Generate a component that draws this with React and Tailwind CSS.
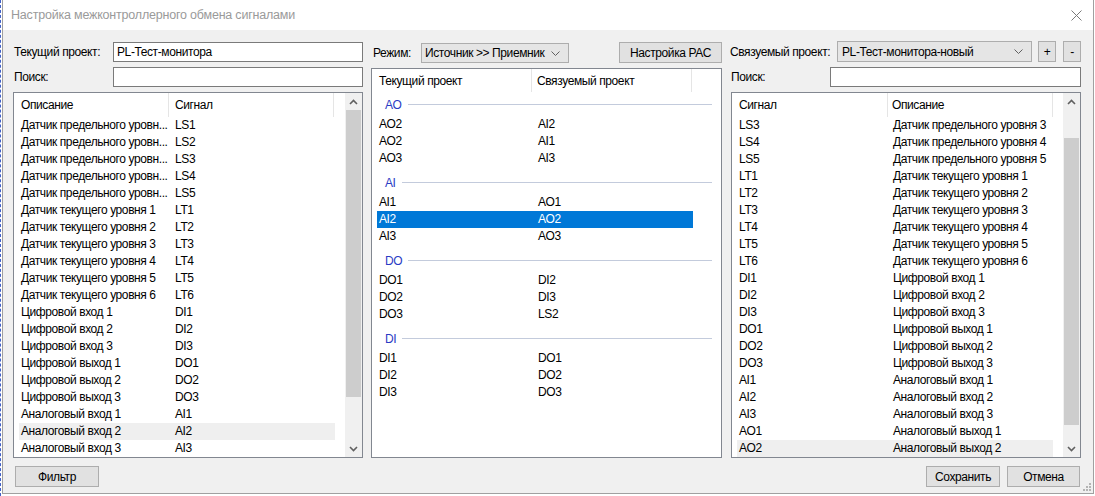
import React from 'react';

const leftRows = [
  ['Датчик предельного уровн...', 'LS1'],
  ['Датчик предельного уровн...', 'LS2'],
  ['Датчик предельного уровн...', 'LS3'],
  ['Датчик предельного уровн...', 'LS4'],
  ['Датчик предельного уровн...', 'LS5'],
  ['Датчик текущего уровня 1', 'LT1'],
  ['Датчик текущего уровня 2', 'LT2'],
  ['Датчик текущего уровня 3', 'LT3'],
  ['Датчик текущего уровня 4', 'LT4'],
  ['Датчик текущего уровня 5', 'LT5'],
  ['Датчик текущего уровня 6', 'LT6'],
  ['Цифровой вход 1', 'DI1'],
  ['Цифровой вход 2', 'DI2'],
  ['Цифровой вход 3', 'DI3'],
  ['Цифровой выход 1', 'DO1'],
  ['Цифровой выход 2', 'DO2'],
  ['Цифровой выход 3', 'DO3'],
  ['Аналоговый вход 1', 'AI1'],
  ['Аналоговый вход 2', 'AI2'],
  ['Аналоговый вход 3', 'AI3'],
];

const rightRows = [
  ['LS3', 'Датчик предельного уровня 3'],
  ['LS4', 'Датчик предельного уровня 4'],
  ['LS5', 'Датчик предельного уровня 5'],
  ['LT1', 'Датчик текущего уровня 1'],
  ['LT2', 'Датчик текущего уровня 2'],
  ['LT3', 'Датчик текущего уровня 3'],
  ['LT4', 'Датчик текущего уровня 4'],
  ['LT5', 'Датчик текущего уровня 5'],
  ['LT6', 'Датчик текущего уровня 6'],
  ['DI1', 'Цифровой вход 1'],
  ['DI2', 'Цифровой вход 2'],
  ['DI3', 'Цифровой вход 3'],
  ['DO1', 'Цифровой выход 1'],
  ['DO2', 'Цифровой выход 2'],
  ['DO3', 'Цифровой выход 3'],
  ['AI1', 'Аналоговый вход 1'],
  ['AI2', 'Аналоговый вход 2'],
  ['AI3', 'Аналоговый вход 3'],
  ['AO1', 'Аналоговый выход 1'],
  ['AO2', 'Аналоговый выход 2'],
];

const groups = [
  { name: 'AO', rows: [['AO2', 'AI2'], ['AO2', 'AI1'], ['AO3', 'AI3']] },
  { name: 'AI', rows: [['AI1', 'AO1'], ['AI2', 'AO2'], ['AI3', 'AO3']], selected: 1 },
  { name: 'DO', rows: [['DO1', 'DI2'], ['DO2', 'DI3'], ['DO3', 'LS2']] },
  { name: 'DI', rows: [['DI1', 'DO1'], ['DI2', 'DO2'], ['DI3', 'DO3']] },
];

function Chevron({ up }) {
  return (
    <svg width="9" height="6" viewBox="0 0 9 6" className="text-[#606060]">
      <path d={up ? 'M1 5 L4.5 1.5 L8 5' : 'M1 1 L4.5 4.5 L8 1'} fill="none" stroke="currentColor" strokeWidth="1.6" />
    </svg>
  );
}

function ComboArrow() {
  return (
    <svg width="9" height="5" viewBox="0 0 9 5" className="text-[#606060] shrink-0">
      <path d="M0.5 0.5 L4.5 4.5 L8.5 0.5" fill="none" stroke="currentColor" strokeWidth="1" />
    </svg>
  );
}

function Scrollbar({ offset }) {
  return (
    <div className="w-[17px] bg-[#f0f0f0] flex flex-col shrink-0">
      <div className="h-[17px] flex items-center justify-center">
        <Chevron up />
      </div>
      <div className="flex-1 px-[1px]">
        <div className="h-[287px] bg-[#cdcdcd]" style={{ marginTop: offset }} />
      </div>
      <div className="h-[17px] flex items-center justify-center">
        <Chevron />
      </div>
    </div>
  );
}

function SignalList({ headers, rows, hl, col1, col2, pad2, offset }) {
  return (
    <div className="h-[366px] border border-[#828790] bg-white flex">
      <div className="flex-1 flex flex-col min-w-0">
        <div className="h-[24px] flex items-center shrink-0">
          <div className="h-full flex items-center pl-[7px] border-r border-[#e5e5e5] shrink-0" style={{ width: col1 }}>{headers[0]}</div>
          <div className="h-full flex items-center border-r border-[#e5e5e5] shrink-0" style={{ width: col2, paddingLeft: pad2 }}>{headers[1]}</div>
        </div>
        <div className="pl-[5px]">
          {rows.map((r, i) => (
            <div key={i} className={`w-[316px] h-[17px] leading-[17px] flex whitespace-nowrap ${i === hl ? 'bg-[#efefef]' : ''}`}>
              <div className="w-[156px] shrink-0 pl-[2px] overflow-hidden">{r[0]}</div>
              <div className="shrink-0">{r[1]}</div>
            </div>
          ))}
        </div>
      </div>
      <Scrollbar offset={offset} />
    </div>
  );
}

function Button({ children, className }) {
  return (
    <div className={`border border-[#adadad] bg-[#e1e1e1] flex items-center justify-center shrink-0 ${className}`}>{children}</div>
  );
}

export default function App() {
  return (
    <div className="w-[1095px] h-[496px] bg-white flex font-['Segoe_UI','Liberation_Sans',sans-serif] text-[12px] tracking-[-0.4px] text-black overflow-hidden">
      <div className="w-[2px] border-l border-dashed border-[#4060c8]" />
      <div className="w-[1092px] h-[494px] border-l border-r border-b border-[#a0a0a0] flex flex-col">
        {/* title bar */}
        <div className="h-[30px] bg-white flex items-center justify-between pl-[8px] pr-[11px] shrink-0">
          <span className="text-[#9a9a9a] text-[12.5px] tracking-[-0.2px]">Настройка межконтроллерного обмена сигналами</span>
          <svg width="11" height="11" viewBox="0 0 11 11" className="text-[#7a7a7a]">
            <path d="M0.5 0.5 L10.5 10.5 M10.5 0.5 L0.5 10.5" stroke="currentColor" strokeWidth="1" />
          </svg>
        </div>

        {/* body */}
        <div className="flex-1 bg-[#f0f0f0] flex pl-[10px] relative whitespace-nowrap">
          {/* left column */}
          <div className="w-[350px] flex flex-col pt-[12px]">
            <div className="h-[20px] flex items-center">
              <span className="w-[100px] pl-[1px]">Текущий проект:</span>
              <div className="w-[250px] h-[20px] border border-[#7a7a7a] bg-white flex items-center pl-[3px]">PL-Тест-монитора</div>
            </div>
            <div className="h-[20px] flex items-center mt-[5px]">
              <span className="w-[100px] pl-[1px]">Поиск:</span>
              <div className="w-[250px] h-[20px] border border-[#7a7a7a] bg-white" />
            </div>
            <div className="mt-[5px]">
              <SignalList headers={['Описание', 'Сигнал']} rows={leftRows} hl={18} col1={155} col2={165} pad2={6} offset={0} />
            </div>
            <Button className="mt-[8px] ml-[2px] w-[84px] h-[21px]">Фильтр</Button>
          </div>

          {/* middle column */}
          <div className="w-[351px] ml-[8px] flex flex-col pt-[12px]">
            <div className="h-[21px] flex items-center">
              <span className="w-[50px] pl-[2px]">Режим:</span>
              <div className="w-[148px] h-[20px] mt-[1px] border border-[#adadad] bg-[#e5e5e5] flex items-center justify-between pl-[3px] pr-[8px]">
                <span>Источник &gt;&gt; Приемник</span>
                <ComboArrow />
              </div>
              <Button className="ml-[50px] w-[103px] h-[21px]">Настройка РАС</Button>
            </div>
            <div className="mt-[5px] h-[390px] border border-[#828790] bg-white flex flex-col">
              <div className="h-[24px] flex shrink-0">
                <div className="w-[160px] h-[23px] flex items-center pl-[7px] border-r border-[#e5e5e5]">Текущий проект</div>
                <div className="w-[160px] h-[23px] flex items-center pl-[5px] border-r border-[#e5e5e5]">Связуемый проект</div>
              </div>
              {groups.map((g, gi) => (
                <div key={g.name} className={gi === 0 ? '' : 'mt-[4px]'}>
                  <div className="h-[23px] flex items-center pl-[13px] pr-[9px]">
                    <span className="text-[#2a3bc4]">{g.name}</span>
                    <div className="flex-1 h-px bg-[#c3cbdc] ml-[6px]" />
                  </div>
                  <div className="pl-[5px]">
                    {g.rows.map((r, i) => (
                      <div
                        key={i}
                        className={`w-[316px] h-[17px] leading-[17px] flex ${g.selected === i ? 'bg-[#0078d7] text-white' : ''}`}
                      >
                        <div className="w-[161px] pl-[2px] shrink-0">{r[0]}</div>
                        <div>{r[1]}</div>
                      </div>
                    ))}
                  </div>
                </div>
              ))}
            </div>
          </div>

          {/* right column */}
          <div className="w-[351px] ml-[8px] flex flex-col pt-[11px]">
            <div className="h-[21px] flex items-center">
              <span className="w-[107px]">Связуемый проект:</span>
              <div className="w-[195px] h-[21px] border border-[#adadad] bg-[#e5e5e5] flex items-center justify-between pl-[4px] pr-[8px]">
                <span>PL-Тест-монитора-новый</span>
                <ComboArrow />
              </div>
              <Button className="ml-[6px] w-[18px] h-[21px]">+</Button>
              <Button className="ml-[7px] w-[18px] h-[21px]">-</Button>
            </div>
            <div className="h-[20px] flex items-center mt-[5px] pl-[1px]">
              <span className="w-[99px]">Поиск:</span>
              <div className="w-[251px] h-[20px] border border-[#7a7a7a] bg-white" />
            </div>
            <div className="mt-[5px] pl-[1px]">
              <SignalList headers={['Сигнал', 'Описание']} rows={rightRows} hl={19} col1={156} col2={165} pad2={4} offset={28} />
            </div>
            <div className="mt-[8px] flex justify-end pr-[1px]">
              <Button className="w-[74px] h-[21px]">Сохранить</Button>
              <Button className="ml-[7px] w-[73px] h-[21px]">Отмена</Button>
            </div>
          </div>

          {/* size grip */}
          <svg width="9" height="9" viewBox="0 0 9 9" className="absolute right-[2px] bottom-[2px]">
            <rect x="7" y="1" width="2" height="2" fill="#b4b4b4" />
            <rect x="4" y="4" width="2" height="2" fill="#b4b4b4" />
            <rect x="7" y="4" width="2" height="2" fill="#b4b4b4" />
            <rect x="1" y="7" width="2" height="2" fill="#b4b4b4" />
            <rect x="4" y="7" width="2" height="2" fill="#b4b4b4" />
            <rect x="7" y="7" width="2" height="2" fill="#b4b4b4" />
          </svg>
        </div>
      </div>
    </div>
  );
}
